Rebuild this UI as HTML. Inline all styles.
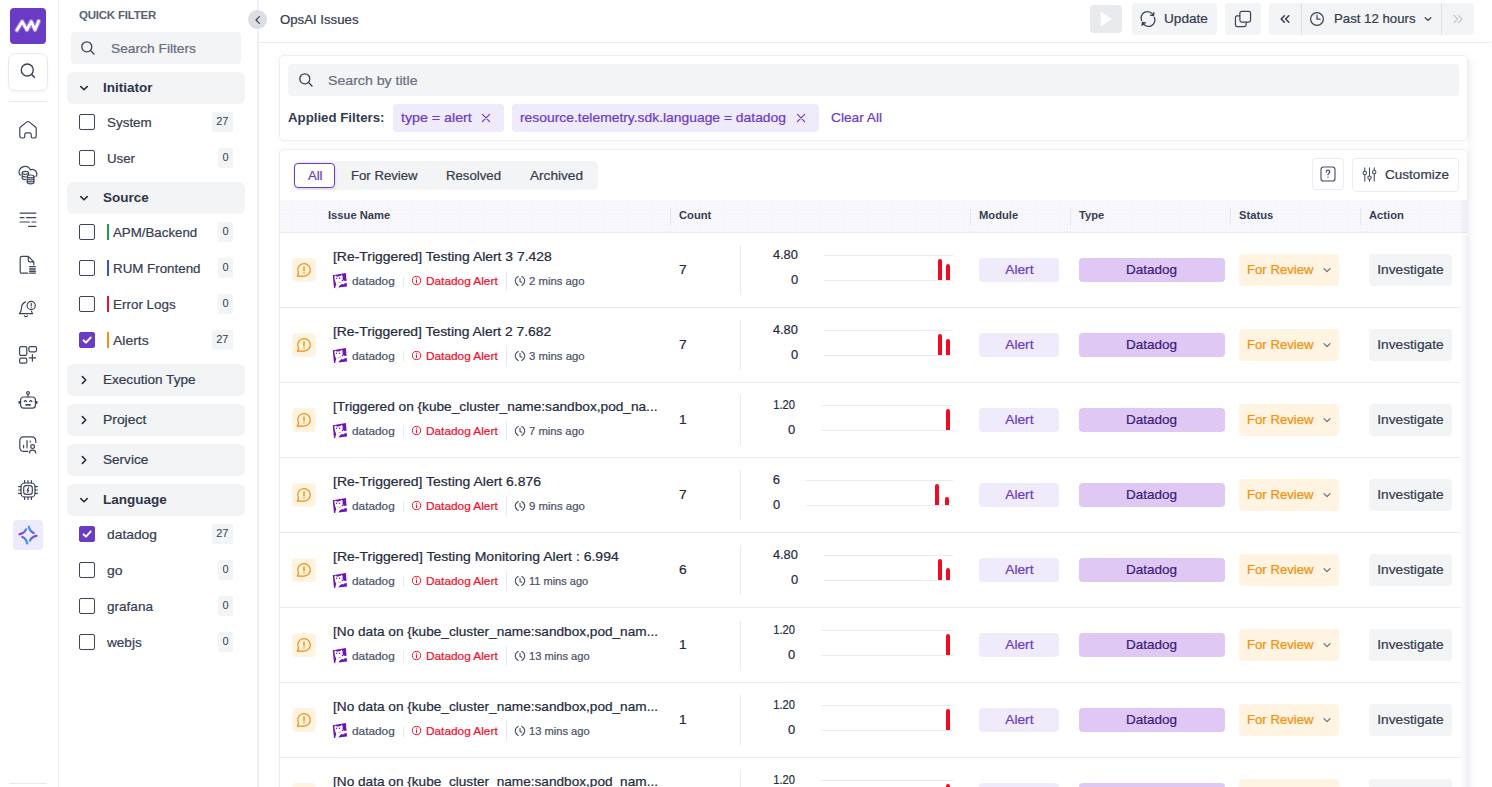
<!DOCTYPE html>
<html lang="en">
<head>
<meta charset="utf-8">
<title>OpsAI Issues</title>
<style>
*{box-sizing:border-box;margin:0;padding:0}
html,body{width:1492px;height:787px;overflow:hidden;background:#fff}
body{font-family:"Liberation Sans",Arial,sans-serif;color:#353c4e;font-size:14px;position:relative}
.abs{position:absolute}
i{font-style:normal}
/* NAV */
#nav{position:absolute;left:0;top:0;width:59px;height:787px;border-right:1px solid #efeff3;background:#fff}
#logo{position:absolute;left:10px;top:8px;width:36px;height:36px;border-radius:4px;background:#6a3cc6}
#nsearch{position:absolute;left:8px;top:53px;width:40px;height:38px;border:1px solid #e9eaee;border-radius:7px;background:#fff;box-shadow:0 2px 3px rgba(0,0,0,.04)}
.ndiv{position:absolute;left:9px;width:38px;height:1px;background:#e9eaee}
.nico{position:absolute;left:18px;width:20px;height:20px}
.nico svg{display:block;width:20px;height:20px;fill:none;stroke:#3d455a;stroke-width:1.2;stroke-linecap:round;stroke-linejoin:round}
#nactive{position:absolute;left:13px;top:520px;width:30px;height:30px;border-radius:4px;background:#efeafb}
/* FILTER PANEL */
#fp{position:absolute;left:59px;top:0;width:200px;height:787px;border-right:2px solid #efeff5;background:#fff}
.qf{position:absolute;left:20px;top:8px;font-size:11.5px;font-weight:700;color:#5b6172;letter-spacing:-.22px;line-height:14px}
.fsearch{position:absolute;left:12px;top:32px;width:170px;height:32px;border-radius:4px;background:#f3f4f6}
.fsearch span{position:absolute;left:40px;top:0;line-height:32px;font-size:14px;color:#5d6473}
.gh{position:absolute;left:8px;width:178px;height:32px;border-radius:6px;background:#f3f4f6;line-height:32px;font-size:14px;color:#353c4e}
.gh b{position:absolute;left:36px;top:0;font-weight:700;font-size:13.5px;color:#2e3547}
.gh span{position:absolute;left:36px;top:0}
.gh svg{position:absolute;left:11px;top:10px;width:12px;height:12px;fill:none;stroke:#2a3042;stroke-width:1.6;stroke-linecap:round;stroke-linejoin:round}
.fi{position:absolute;left:0;width:199px;height:20px}
.cb{position:absolute;left:20px;top:2px;width:16px;height:16px;border:1px solid #3c4459;border-radius:2px;background:#fff}
.cb.on{background:#6a3cc6;border-color:#6a3cc6}
.cb.on svg{position:absolute;left:1px;top:1px;width:12px;height:12px;fill:none;stroke:#fff;stroke-width:2;stroke-linecap:round;stroke-linejoin:round}
.fi .lb{position:absolute;left:48px;top:.75px;line-height:20px;color:#394052}
.fi .bar{position:absolute;left:48px;top:2px;width:2px;height:16px}
.fi .lb2{left:54px}
.fi .ct{position:absolute;right:25px;top:0;height:20px;line-height:18.5px;padding:0 4.5px;font-size:11px;background:#f3f4f6;border-radius:2px;color:#353c4e}
/* MAIN */
#collapse{position:absolute;left:248px;top:10px;width:19px;height:19px;border-radius:50%;background:#dcdee3;z-index:5}
#collapse svg{position:absolute;left:4.5px;top:4.5px;width:10px;height:10px;fill:none;stroke:#3a4257;stroke-width:1.2;stroke-linecap:round;stroke-linejoin:round}
#title{position:absolute;left:279.75px;top:8.5px;line-height:20px;color:#353c4e}
#hline{position:absolute;left:259px;top:42px;width:1232px;height:1px;background:#ececf1}
.hb{position:absolute;top:3px;height:32px;background:#f3f4f6;border-radius:4px;color:#353c4e;font-size:14px;line-height:32px}
.hb svg{position:absolute;fill:none;stroke:#3a4257;stroke-width:1.3;stroke-linecap:round;stroke-linejoin:round}
.card{position:absolute;left:279px;width:1189px;border:1px solid #eeeef3;border-radius:5px;background:#fff;box-shadow:0 0 7px rgba(30,30,70,.045)}
#msearch{position:absolute;left:288px;top:64px;width:1171px;height:32px;border-radius:4px;background:#f3f4f6}
#msearch span{position:absolute;left:40px;top:0;line-height:32px;font-size:14px;color:#636a79}
.chip{position:absolute;top:104px;height:28px;border-radius:4px;background:#f0ebfb;color:#6a3cc6;font-size:14px;line-height:28px}
.chip span{position:absolute;left:8px;top:0;white-space:nowrap}
.chip svg{position:absolute;top:9px;width:10px;height:10px;stroke:#6a3cc6;stroke-width:1.2;stroke-linecap:round;fill:none}
#tabs{position:absolute;left:294px;top:161px;width:304px;height:29px;border-radius:5px;background:#f3f4f6}
#tabs .t{position:absolute;top:0;line-height:29px;color:#353c4e}
#tall{position:absolute;left:294px;top:163px;width:41px;height:25px;border:1px solid #6a3cc6;border-radius:4px;background:#fff;color:#6a3cc6;font-size:13.5px;line-height:23px;text-align:center;box-shadow:0 1px 3px rgba(60,40,120,.18)}
.ob{position:absolute;top:158px;height:32px;border:1px solid #ececf1;border-radius:4px;background:#fff}
.ob svg{position:absolute;fill:none;stroke:#414960;stroke-width:1.1;stroke-linecap:round;stroke-linejoin:round}
#thead{position:absolute;left:280px;top:200px;width:1187px;height:33px;background:#f8f7fb radial-gradient(circle,#f0eef7 .5px,rgba(240,238,247,0) .85px) 0 0/3px 3px;border-bottom:1px solid #ececf3}
#thead .h{position:absolute;top:0;line-height:31px;font-size:11.2px;font-weight:700;color:#363e52}
#thead .d{position:absolute;top:8px;width:1px;height:17px;background:#e6e6ee}
.row{position:absolute;left:280px;width:1181px;height:76px;border-bottom:1px solid #ececf1}
.ri{position:absolute;left:12px;top:26px;width:24px;height:24px;border-radius:4px;background:#fff3e2}
.ri svg{position:absolute;left:4px;top:4px;width:16px;height:16px;fill:none;stroke:#f98a0a;stroke-width:1.2;stroke-linecap:round;stroke-linejoin:round}
.rt{position:absolute;left:53px;top:15.25px;line-height:20px;color:#262c3d}
.rs{position:absolute;top:41.3px;line-height:16px;color:#4b5366}
.rs.red{color:#f3102e}
.sd{position:absolute;width:1px;background:#e9e9ee}
.cnt{position:absolute;left:399.25px;top:28px;line-height:20px;color:#262c3d}
.br{position:absolute;width:4px;background:#f00a22;border-radius:2px 2px 0 0}
.bAlert{position:absolute;left:699px;top:26px;width:80px;height:24px;border-radius:4px;background:#f0ebfb;color:#6a3cc6;font-size:13.5px;line-height:24px;text-align:center}
.bDd{position:absolute;left:799px;top:26px;width:146px;height:24px;border-radius:4px;background:#dfc8f4;color:#3b1c78;font-size:13.5px;line-height:24px;text-align:center}
.bSt{position:absolute;left:959px;top:22px;width:100px;height:32px;border-radius:4px;background:#fff3e2;color:#f79009;font-size:13.5px;line-height:32px}
.bSt span{position:absolute;left:8px;top:0}
.bSt svg{position:absolute;left:83px;top:11px;width:10px;height:10px;fill:none;stroke:#666d7c;stroke-width:1.2;stroke-linecap:round;stroke-linejoin:round}
.bInv{position:absolute;left:1089px;top:22px;width:83px;height:32px;border-radius:4px;background:#f3f4f6;color:#353c4e;font-size:13.5px;line-height:32px;text-align:center}
#rshadow{position:absolute;left:1468px;top:60px;width:9px;height:730px;background:linear-gradient(to right,rgba(30,30,70,.035),rgba(30,30,70,0))}
.yl{position:relative;height:75px;font-size:12.8px;color:#262c3d;text-align:right;padding-top:15.2px;line-height:16px;white-space:nowrap}
.yl div{position:static;height:16px;margin-bottom:9px}
.cg{flex:1;margin-left:26px;position:relative;height:75px}
.cg:before,.cg:after{content:"";position:absolute;left:0;right:0;height:1px;background:#ebebef}
.cg:before{top:23px}
.cg:after{top:48px}

.tx{display:inline-block;white-space:nowrap;transform-origin:0 50%;-webkit-text-stroke:.22px currentColor}
.txc{transform-origin:50% 50%}
.txr{transform-origin:100% 50%}
.yl div{display:flex;justify-content:flex-end}
#rstrip{position:absolute;left:1459px;top:200px;width:8px;height:600px;background:linear-gradient(to right,rgba(40,30,90,0),rgba(40,30,90,.05))}
</style>
</head>
<body>
<div id="nav">
<div id="logo"><svg viewBox="0 0 36 36" width="36" height="36"><path d="M6.8 22.2 L12.2 13.6 L16.9 21.8 L21.2 13.6 L25 21.8 L28.6 13.2" fill="none" stroke="#d6c6f7" stroke-width="4.8" stroke-linecap="round" stroke-linejoin="round" opacity=".45"/><path d="M6.8 22.2 L12.2 13.6 L16.9 21.8 L21.2 13.6 L25 21.8 L28.6 13.2" fill="none" stroke="#fff" stroke-width="2.7" stroke-linecap="round" stroke-linejoin="round"/></svg></div>
<div id="nsearch"><svg viewBox="0 0 38 36" width="38" height="36"><circle cx="18.3" cy="16" r="6" fill="none" stroke="#3a4257" stroke-width="1.4"/><path d="M22.7 20.4 L25.4 23.2" stroke="#3a4257" stroke-width="1.5" stroke-linecap="round"/></svg></div>
<div class="ndiv" style="top:101px"></div>
<div class="ndiv" style="top:783px"></div>
<div class="nico" style="top:120px"><svg viewBox="0 0 20 20" ><path d="M1.8 8.4 Q1.8 7.6 2.5 7 L8.9 1.9 Q10 1.1 11.1 1.9 L17.5 7 Q18.2 7.6 18.2 8.4 V15.8 Q18.2 18 16 18 H14.6 Q13.2 18 13.2 16.6 V14.4 Q13.2 12.8 11.6 12.8 H8.4 Q6.8 12.8 6.8 14.4 V16.6 Q6.8 18 5.4 18 H4 Q1.8 18 1.8 15.8 Z"/></svg></div>
<div class="nico" style="top:165px"><svg viewBox="0 0 20 20" ><path d="M2.3 10.2 Q0.6 8.6 1.2 6.2 Q2.2 1.8 7 1.4 Q10.8 1.2 12.4 4.9 Q13.6 4.2 15.2 4.6 Q18.8 5.6 18.9 9 Q18.9 10.4 18.1 11.4"/><ellipse cx="7.4" cy="7.8" rx="3.2" ry="1.5"/><path d="M4.2 7.8 V13 Q4.2 14.6 7.6 14.6 M4.2 10.4 Q4.4 11.8 7.4 11.9 M10.6 7.8 V9.4"/><ellipse cx="12.6" cy="11.4" rx="3.4" ry="1.4"/><path d="M9.2 11.4 V17.3 Q9.2 18.8 12.6 18.8 Q16 18.8 16 17.3 V11.4 M9.2 13.5 Q9.3 14.9 12.6 14.9 Q15.9 14.9 16 13.5 M9.2 15.5 Q9.3 16.9 12.6 16.9 Q15.9 16.9 16 15.5"/></svg></div>
<div class="nico" style="top:210px"><svg viewBox="0 0 20 20" ><path d="M2.2 3.2 H17.8 M2.2 7.6 H6 M8.6 7.6 H17.8 M2.2 12 H11.4 M14 12 H17.8 M10.6 16.4 H17.8"/></svg></div>
<div class="nico" style="top:255px"><svg viewBox="0 0 20 20" ><path d="M9.8 18.2 H4 Q2.2 18.2 2.2 16.4 V3.2 Q2.2 1.4 4 1.4 H10.3 L15.8 6.9 V9.8 M10.3 1.6 V5.3 Q10.3 6.9 11.9 6.9 H15.6"/><path d="M11.2 11.5 H17.8 M11.2 13.2 H17.8 M11.2 14.9 H17.8 M11.2 16.6 H17.8 M11.2 18.2 H17.8" stroke-width="1.15" stroke-linecap="butt"/></svg></div>
<div class="nico" style="top:300px"><svg viewBox="0 0 20 20" ><path d="M7.6 1.9 Q3.6 3.4 3.4 8.4 Q3.3 11.6 1.4 13.6 H14.6 Q13.8 12.6 13.5 11"/><path d="M6.4 15.8 Q7.9 17.6 9.4 15.8"/><circle cx="13.2" cy="5.5" r="4.1"/><path d="M13.2 3.4 V6 M13.2 7.7 V7.8"/></svg></div>
<div class="nico" style="top:345px"><svg viewBox="0 0 20 20" ><rect x="1.6" y="1.6" width="7.2" height="8.8" rx="1.5"/><rect x="10.9" y="1.6" width="7.6" height="5.2" rx="1.5"/><rect x="1.6" y="13.2" width="7.2" height="5" rx="1.5"/><path d="M14.4 9.6 V16.2 M11.1 12.9 H17.7"/></svg></div>
<div class="nico" style="top:390px"><svg viewBox="0 0 20 20" ><circle cx="10" cy="3.1" r="1.4"/><path d="M10 4.5 V7"/><rect x="2.6" y="7" width="14.8" height="11.2" rx="3"/><path d="M.5 12.4 H2.6 M17.4 12.4 H19.5" stroke-width="2.6" stroke-linecap="butt"/><path d="M6.2 11.6 Q7.4 9.6 8.6 11.6 M11.6 11.6 Q12.8 9.6 14 11.6"/><path d="M7.4 14.9 H12.8" stroke-width="1.7" stroke-linecap="butt"/></svg></div>
<div class="nico" style="top:435px"><svg viewBox="0 0 20 20" ><path d="M9.6 16.4 H6 Q1.8 16.4 1.8 12.2 V6 Q1.8 1.8 6 1.8 H13.6 Q17.8 1.8 17.8 6 V7.6"/><path d="M5.6 10.4 V12.8 M9 5.6 V12.8 M12.2 6.2 V7"/><circle cx="14.6" cy="11.6" r="1.9"/><path d="M11.4 18 Q11.6 15.2 14.6 15.2 Q17.6 15.2 17.8 18"/></svg></div>
<div class="nico" style="top:480px"><svg viewBox="0 0 20 20" ><rect x="3" y="3" width="14" height="14" rx="3.6"/><rect x="5.7" y="5.7" width="8.6" height="8.6" rx="2.4"/><path d="M10.7 7.6 L9.1 10.2 H10.9 L9.3 12.4" stroke-width="1.1"/><path d="M6.6 .6 V3 M10 .6 V3 M13.4 .6 V3 M6.6 17 V19.4 M10 17 V19.4 M13.4 17 V19.4 M.6 6.6 H3 M.6 10 H3 M.6 13.4 H3 M17 6.6 H19.4 M17 10 H19.4 M17 13.4 H19.4" stroke-width="1.2"/></svg></div>
<div id="nactive"><svg viewBox="0 0 30 30" width="30" height="30"><defs><linearGradient id="g1" gradientUnits="userSpaceOnUse" x1="0" y1="6" x2="0" y2="24"><stop offset="0" stop-color="#25b4e8"/><stop offset=".3" stop-color="#5a72e2"/><stop offset=".5" stop-color="#7d3cd6"/><stop offset=".7" stop-color="#5a72e2"/><stop offset="1" stop-color="#25b4e8"/></linearGradient></defs><g fill="none" stroke="url(#g1)" stroke-width="2.3" stroke-linecap="round"><path d="M15.8 6.6 Q16.8 11.4 20.6 13"/><path d="M23.4 15.8 Q18.6 16.8 17 20.6"/><path d="M14.2 23.4 Q13.2 18.6 9.4 17"/><path d="M6.6 14.2 Q11.4 13.2 13 9.4"/></g></svg></div>
</div>
<div id="fp">
<div class="qf">QUICK FILTER</div>
<div class="fsearch"><svg viewBox="0 0 16 16" width="16" height="16" style="position:absolute;left:9px;top:8px"><circle cx="6.8" cy="6.8" r="5" fill="none" stroke="#3a4257" stroke-width="1.3"/><path d="M10.5 10.5 L14 14" stroke="#3a4257" stroke-width="1.4" stroke-linecap="round"/></svg><span class="tx" style="font-size:13px;transform:scaleX(1.0599);position:absolute;left:40px;top:.75px;line-height:32px;color:#666d7c">Search Filters</span></div>
<div class="gh" style="top:72px"><svg viewBox="0 0 12 12" ><path d="M2.8 4.6 L6 7.8 L9.2 4.6"/></svg><b>Initiator</b></div>
<div class="fi" style="top:112px"><div class="cb"></div><span class="tx lb" style="font-size:13px;transform:scaleX(1.0325);">System</span><div class="ct">27</div></div>
<div class="fi" style="top:148px"><div class="cb"></div><span class="tx lb" style="font-size:13px;transform:scaleX(1.0201);">User</span><div class="ct">0</div></div>
<div class="gh" style="top:182px"><svg viewBox="0 0 12 12" ><path d="M2.8 4.6 L6 7.8 L9.2 4.6"/></svg><b>Source</b></div>
<div class="fi" style="top:222px"><div class="cb"></div><div class="bar" style="background:#17a34a"></div><span class="tx lb lb2" style="font-size:13px;transform:scaleX(1.0227);">APM/Backend</span><div class="ct">0</div></div>
<div class="fi" style="top:258px"><div class="cb"></div><div class="bar" style="background:#3b4fd8"></div><span class="tx lb lb2" style="font-size:13px;transform:scaleX(1.0264);">RUM Frontend</span><div class="ct">0</div></div>
<div class="fi" style="top:294px"><div class="cb"></div><div class="bar" style="background:#ee1026"></div><span class="tx lb lb2" style="font-size:13px;transform:scaleX(1.0339);">Error Logs</span><div class="ct">0</div></div>
<div class="fi" style="top:330px"><div class="cb on"><svg viewBox="0 0 12 12" ><path d="M2.6 6.4 L5 8.6 L9.6 3.6"/></svg></div><div class="bar" style="background:#f79009"></div><span class="tx lb lb2" style="font-size:13px;transform:scaleX(1.0758);">Alerts</span><div class="ct">27</div></div>
<div class="gh" style="top:364px"><svg viewBox="0 0 12 12" ><path d="M4.4 2.6 L7.8 6 L4.4 9.4"/></svg><span class="tx" style="font-size:13px;transform:scaleX(1.0434);position:absolute;left:36px;top:0;line-height:32px">Execution Type</span></div>
<div class="gh" style="top:404px"><svg viewBox="0 0 12 12" ><path d="M4.4 2.6 L7.8 6 L4.4 9.4"/></svg><span class="tx" style="font-size:13px;transform:scaleX(1.0689);position:absolute;left:36px;top:0;line-height:32px">Project</span></div>
<div class="gh" style="top:444px"><svg viewBox="0 0 12 12" ><path d="M4.4 2.6 L7.8 6 L4.4 9.4"/></svg><span class="tx" style="font-size:13px;transform:scaleX(1.0438);position:absolute;left:36px;top:0;line-height:32px">Service</span></div>
<div class="gh" style="top:484px"><svg viewBox="0 0 12 12" ><path d="M2.8 4.6 L6 7.8 L9.2 4.6"/></svg><b>Language</b></div>
<div class="fi" style="top:524px"><div class="cb on"><svg viewBox="0 0 12 12" ><path d="M2.6 6.4 L5 8.6 L9.6 3.6"/></svg></div><span class="tx lb" style="font-size:13px;transform:scaleX(1.0640);">datadog</span><div class="ct">27</div></div>
<div class="fi" style="top:560px"><div class="cb"></div><span class="tx lb" style="font-size:13px;transform:scaleX(1.0719);">go</span><div class="ct">0</div></div>
<div class="fi" style="top:596px"><div class="cb"></div><span class="tx lb" style="font-size:13px;transform:scaleX(1.0433);">grafana</span><div class="ct">0</div></div>
<div class="fi" style="top:632px"><div class="cb"></div><span class="tx lb" style="font-size:13px;transform:scaleX(1.0440);">webjs</span><div class="ct">0</div></div>
</div>
<div id="main">
<div id="collapse"><svg viewBox="0 0 10 10" ><path d="M6.4 1.6 L3 5 L6.4 8.4"/></svg></div>
<div id="title"><span class="tx" style="font-size:13px;transform:scaleX(1.0154);">OpsAI Issues</span></div>
<div id="hline"></div>
<div class="hb" style="left:1090px;top:5px;width:32px;height:28px;background:#e9eaed"><svg viewBox="0 0 32 28" width="32" height="28" style="left:0;top:0"><path d="M11.4 7.6 L21.4 14 L11.4 20.4 Z" fill="#fff" stroke="#fff" stroke-width="1"/></svg></div>
<div class="hb" style="left:1132px;width:85px"><svg viewBox="0 0 18 18" width="18" height="18" style="left:7px;top:7px"><path d="M2.6 10.6 A6.4 6.4 0 0 1 14.4 5.4 M14.9 2.6 L14.5 5.6 L11.5 5.2 M15.4 7.4 A6.4 6.4 0 0 1 3.6 12.6 M3.1 15.4 L3.5 12.4 L6.5 12.8"/></svg><span class="tx" style="font-size:13px;transform:scaleX(1.0472);position:absolute;left:32px;top:0;line-height:32px">Update</span></div>
<div class="hb" style="left:1225px;width:36px"><svg viewBox="0 0 18 18" width="20" height="20" style="left:8px;top:6px"><rect x="6.2" y="2.2" width="9.6" height="9.6" rx="1.6" stroke-width="1.1"/><path d="M5.8 6.2 H3.8 Q2.2 6.2 2.2 7.8 V14.2 Q2.2 15.8 3.8 15.8 H10.2 Q11.8 15.8 11.8 14.2 V12.2" stroke-width="1.1"/></svg></div>
<div class="hb" style="left:1269px;width:205px"><svg viewBox="0 0 12 12" width="12" height="12" style="left:10px;top:10px"><path d="M5.4 2.8 L2.2 6 L5.4 9.2 M9.8 2.8 L6.6 6 L9.8 9.2" stroke-width="1.6"/></svg><i style="position:absolute;left:32px;top:0;width:1px;height:32px;background:#dfe0e5"></i><svg viewBox="0 0 16 16" width="16" height="16" style="left:40px;top:8px"><circle cx="8" cy="8" r="6.4" stroke-width="1.2"/><path d="M8 4.4 V8.2 H11" stroke-width="1.2"/></svg><span class="tx" style="font-size:13px;transform:scaleX(1.0160);position:absolute;left:65px;top:0;line-height:32px">Past 12 hours</span><svg viewBox="0 0 10 10" width="10" height="10" style="left:154px;top:11px"><path d="M2.2 3.7 L5 6.4 L7.8 3.7" stroke-width="1.3"/></svg><i style="position:absolute;left:172px;top:0;width:1px;height:32px;background:#dfe0e5"></i><svg viewBox="0 0 12 12" width="12" height="12" style="left:183px;top:10px"><path d="M2 2.4 L5.6 6 L2 9.6 M6.4 2.4 L10 6 L6.4 9.6" stroke="#c3c6cf" stroke-width="1.3"/></svg></div>
<div class="card" style="top:55px;height:86px"></div>
<div id="msearch"><svg viewBox="0 0 16 16" width="16" height="16" style="position:absolute;left:10px;top:8px"><circle cx="6.8" cy="6.8" r="5" fill="none" stroke="#3a4257" stroke-width="1.3"/><path d="M10.5 10.5 L14 14" stroke="#3a4257" stroke-width="1.4" stroke-linecap="round"/></svg><span class="tx" style="font-size:13px;transform:scaleX(1.0865);position:absolute;left:40px;top:.75px;line-height:32px;color:#6a7180">Search by title</span></div>
<div class="abs" style="left:288px;top:108px;line-height:20px;font-size:13.25px;font-weight:700;color:#343b4f">Applied Filters:</div>
<div class="chip" style="left:393px;width:111px"><span class="tx" style="font-size:13px;transform:scaleX(1.0939);position:absolute;left:7.75px;top:0;line-height:28px">type = alert</span><svg viewBox="0 0 10 10" style="left:88px"><path d="M1.4 1.4 L8.6 8.6 M8.6 1.4 L1.4 8.6"/></svg></div>
<div class="chip" style="left:512px;width:307px"><span class="tx" style="font-size:13px;transform:scaleX(1.0663);position:absolute;left:8px;top:0;line-height:28px">resource.telemetry.sdk.language = datadog</span><svg viewBox="0 0 10 10" style="left:284px"><path d="M1.4 1.4 L8.6 8.6 M8.6 1.4 L1.4 8.6"/></svg></div>
<div class="abs" style="left:831px;top:107px;line-height:20px;color:#6a3cc6"><span class="tx" style="font-size:13px;transform:scaleX(1.0535);">Clear All</span></div>
<div class="card" style="top:149px;height:660px;border-bottom-left-radius:0;border-bottom-right-radius:0"></div>
<div id="tabs"><span class="tx t" style="font-size:13px;transform:scaleX(1.0116);left:56.5px">For Review</span><span class="tx t" style="font-size:13px;transform:scaleX(1.0148);left:151.75px">Resolved</span><span class="tx t" style="font-size:13px;transform:scaleX(1.0478);left:235.5px">Archived</span></div>
<div id="tall"><span class="tx txc" style="font-size:13px;transform:scaleX(1.0105);position:relative;left:.5px">All</span></div>
<div class="ob" style="left:1312px;width:32px"><svg viewBox="0 0 18 18" width="18" height="18" style="left:6px;top:6px"><rect x="2" y="2" width="14" height="14" rx="2.6"/><path d="M7.2 7 Q7.3 5.2 9 5.2 Q10.8 5.2 10.8 6.8 Q10.8 7.8 9.6 8.4 Q9 8.8 9 9.8 M9 12.2 V12.3" stroke-width="1.2"/></svg></div>
<div class="ob" style="left:1352px;width:107px;height:34px"><svg viewBox="0 0 18 18" width="17" height="17" style="left:8px;top:7px"><path d="M4 2 V5.4 M4 9.2 V16 M9 2 V10.4 M9 14.2 V16 M14 2 V4.6 M14 8.4 V16"/><circle cx="4" cy="7.3" r="1.8"/><circle cx="9" cy="12.3" r="1.8"/><circle cx="14" cy="6.5" r="1.8"/></svg><span class="tx" style="font-size:13px;transform:scaleX(1.0422);position:absolute;left:32px;top:1px;line-height:30px;color:#353c4e">Customize</span></div>
<div id="thead"><div class="h" style="left:48px">Issue Name</div><div class="h" style="left:399px">Count</div><div class="h" style="left:699px">Module</div><div class="h" style="left:799px">Type</div><div class="h" style="left:959px">Status</div><div class="h" style="left:1089px">Action</div><div class="d" style="left:390px"></div><div class="d" style="left:690px"></div><div class="d" style="left:790px"></div><div class="d" style="left:950px"></div><div class="d" style="left:1080px"></div></div>
<div class="row" style="top:232px"><div class="ri"><svg viewBox="0 0 16 16" ><path d="M8 14.2 A6.3 6.3 0 1 0 2.5 11 L1.4 14.2 Z"/><path d="M8 4.4 V9.3 M8 10.2 V11.5" stroke="#fdab1e" stroke-width="1.9" stroke-linecap="butt"/></svg></div><span class="tx rt" style="font-size:13px;transform:scaleX(1.0696);">[Re-Triggered] Testing Alert 3 7.428</span><svg viewBox="0 0 16 17" width="16" height="17" style="position:absolute;left:52px;top:41px"><path d="M0.75 2.2 L13.9 0.1 L15 13.5 L6.4 14.5 L4.9 16.4 L3.6 14.75 L2 14.9 Z" fill="#7014b4"/><path d="M2.3 3.5 L3.7 2.5 L5 3.7 L8.3 3.1 L9.8 1.8 L10.7 3.4 L10.5 6 L11.7 7.7 L15.4 8 L15.5 9.5 L12.6 10.5 L11.2 11.4 L10 10.9 L8.2 12 L7 13.6 L6.2 15.6 L4.9 16.4 L3.5 15.6 L3.3 14 L4.3 11 L3.2 8.4 L2.6 5.6 Z" fill="#fff"/><circle cx="4.6" cy="5.3" r=".72" fill="#7014b4"/><circle cx="7.5" cy="5.2" r=".78" fill="#7014b4"/><circle cx="10.4" cy="7.5" r=".7" fill="#7014b4"/><path d="M6 9.1 Q7.6 10 9.3 8.9" stroke="#7014b4" stroke-width=".55" fill="none" opacity=".7"/></svg><span class="tx rs" style="font-size:11.2px;transform:scaleX(1.0559);left:72px">datadog</span><div class="sd" style="left:123px;top:44px;height:11px"></div><svg viewBox="0 0 11 11" width="11" height="11" style="position:absolute;left:131px;top:43px"><circle cx="5.5" cy="5.5" r="4.1" fill="none" stroke="#f3102e" stroke-width="1"/><path d="M5.5 5 V7.7 M5.5 3.2 V3.3" stroke="#f3102e" stroke-width="1" stroke-linecap="round"/></svg><span class="tx rs red" style="font-size:11.2px;transform:scaleX(1.0572);left:145.75px">Datadog Alert</span><div class="sd" style="left:226px;top:39px;height:20px"></div><svg viewBox="0 0 12 12" width="12" height="12" style="position:absolute;left:234px;top:43px"><path d="M4.2 1.5 Q1.1 3 1.3 6.4 Q1.6 9.2 4.2 10.5 M7.8 1.5 Q10.9 3 10.7 6.4 Q10.4 9.2 7.8 10.5" fill="none" stroke="#454d60" stroke-width="1.1" stroke-linecap="round"/><path d="M6 3.2 V6.4 L7.8 7.3" fill="none" stroke="#454d60" stroke-width="1.1" stroke-linecap="round" stroke-linejoin="round"/></svg><span class="tx rs" style="font-size:11.2px;transform:scaleX(1.0130);left:249.25px">2 mins ago</span><span class="tx cnt" style="font-size:13px;transform:scaleX(1.0600);">7</span><div class="sd" style="left:460px;top:13px;height:50px"></div><div class="ych" style="position:absolute;left:493px;top:0;width:180px;height:75px;display:flex"><div class="yl" style="width:25px"><div><span class="tx txr" style="font-size:12.8px;transform:scaleX(1.0035);">4.80</span></div><div><span class="tx txr" style="font-size:12.8px;transform:scaleX(1.0114);">0</span></div></div><div class="cg"></div></div><div class="br" style="left:658px;top:27px;height:21px"></div><div class="br" style="left:666px;top:32px;height:16px"></div><div class="bAlert"><span class="tx txc" style="font-size:13px;transform:scaleX(1.0568);">Alert</span></div><div class="bDd"><span class="tx txc" style="font-size:13px;transform:scaleX(1.0376);">Datadog</span></div><div class="bSt"><span class="tx" style="font-size:13px;transform:scaleX(1.0116);position:absolute;left:8px;top:0;line-height:32px">For Review</span><svg viewBox="0 0 10 10" ><path d="M2 3.6 L5 6.6 L8 3.6"/></svg></div><div class="bInv"><span class="tx txc" style="font-size:13px;transform:scaleX(1.0545);">Investigate</span></div></div>
<div class="row" style="top:307px"><div class="ri"><svg viewBox="0 0 16 16" ><path d="M8 14.2 A6.3 6.3 0 1 0 2.5 11 L1.4 14.2 Z"/><path d="M8 4.4 V9.3 M8 10.2 V11.5" stroke="#fdab1e" stroke-width="1.9" stroke-linecap="butt"/></svg></div><span class="tx rt" style="font-size:13px;transform:scaleX(1.0672);">[Re-Triggered] Testing Alert 2 7.682</span><svg viewBox="0 0 16 17" width="16" height="17" style="position:absolute;left:52px;top:41px"><path d="M0.75 2.2 L13.9 0.1 L15 13.5 L6.4 14.5 L4.9 16.4 L3.6 14.75 L2 14.9 Z" fill="#7014b4"/><path d="M2.3 3.5 L3.7 2.5 L5 3.7 L8.3 3.1 L9.8 1.8 L10.7 3.4 L10.5 6 L11.7 7.7 L15.4 8 L15.5 9.5 L12.6 10.5 L11.2 11.4 L10 10.9 L8.2 12 L7 13.6 L6.2 15.6 L4.9 16.4 L3.5 15.6 L3.3 14 L4.3 11 L3.2 8.4 L2.6 5.6 Z" fill="#fff"/><circle cx="4.6" cy="5.3" r=".72" fill="#7014b4"/><circle cx="7.5" cy="5.2" r=".78" fill="#7014b4"/><circle cx="10.4" cy="7.5" r=".7" fill="#7014b4"/><path d="M6 9.1 Q7.6 10 9.3 8.9" stroke="#7014b4" stroke-width=".55" fill="none" opacity=".7"/></svg><span class="tx rs" style="font-size:11.2px;transform:scaleX(1.0559);left:72px">datadog</span><div class="sd" style="left:123px;top:44px;height:11px"></div><svg viewBox="0 0 11 11" width="11" height="11" style="position:absolute;left:131px;top:43px"><circle cx="5.5" cy="5.5" r="4.1" fill="none" stroke="#f3102e" stroke-width="1"/><path d="M5.5 5 V7.7 M5.5 3.2 V3.3" stroke="#f3102e" stroke-width="1" stroke-linecap="round"/></svg><span class="tx rs red" style="font-size:11.2px;transform:scaleX(1.0572);left:145.75px">Datadog Alert</span><div class="sd" style="left:226px;top:39px;height:20px"></div><svg viewBox="0 0 12 12" width="12" height="12" style="position:absolute;left:234px;top:43px"><path d="M4.2 1.5 Q1.1 3 1.3 6.4 Q1.6 9.2 4.2 10.5 M7.8 1.5 Q10.9 3 10.7 6.4 Q10.4 9.2 7.8 10.5" fill="none" stroke="#454d60" stroke-width="1.1" stroke-linecap="round"/><path d="M6 3.2 V6.4 L7.8 7.3" fill="none" stroke="#454d60" stroke-width="1.1" stroke-linecap="round" stroke-linejoin="round"/></svg><span class="tx rs" style="font-size:11.2px;transform:scaleX(1.0176);left:249.25px">3 mins ago</span><span class="tx cnt" style="font-size:13px;transform:scaleX(1.0600);">7</span><div class="sd" style="left:460px;top:13px;height:50px"></div><div class="ych" style="position:absolute;left:493px;top:0;width:180px;height:75px;display:flex"><div class="yl" style="width:25px"><div><span class="tx txr" style="font-size:12.8px;transform:scaleX(1.0035);">4.80</span></div><div><span class="tx txr" style="font-size:12.8px;transform:scaleX(1.0114);">0</span></div></div><div class="cg"></div></div><div class="br" style="left:658px;top:27px;height:21px"></div><div class="br" style="left:666px;top:32px;height:16px"></div><div class="bAlert"><span class="tx txc" style="font-size:13px;transform:scaleX(1.0568);">Alert</span></div><div class="bDd"><span class="tx txc" style="font-size:13px;transform:scaleX(1.0376);">Datadog</span></div><div class="bSt"><span class="tx" style="font-size:13px;transform:scaleX(1.0116);position:absolute;left:8px;top:0;line-height:32px">For Review</span><svg viewBox="0 0 10 10" ><path d="M2 3.6 L5 6.6 L8 3.6"/></svg></div><div class="bInv"><span class="tx txc" style="font-size:13px;transform:scaleX(1.0545);">Investigate</span></div></div>
<div class="row" style="top:382px"><div class="ri"><svg viewBox="0 0 16 16" ><path d="M8 14.2 A6.3 6.3 0 1 0 2.5 11 L1.4 14.2 Z"/><path d="M8 4.4 V9.3 M8 10.2 V11.5" stroke="#fdab1e" stroke-width="1.9" stroke-linecap="butt"/></svg></div><span class="tx rt" style="font-size:13px;transform:scaleX(1.0507);">[Triggered on {kube_cluster_name:sandbox,pod_na...</span><svg viewBox="0 0 16 17" width="16" height="17" style="position:absolute;left:52px;top:41px"><path d="M0.75 2.2 L13.9 0.1 L15 13.5 L6.4 14.5 L4.9 16.4 L3.6 14.75 L2 14.9 Z" fill="#7014b4"/><path d="M2.3 3.5 L3.7 2.5 L5 3.7 L8.3 3.1 L9.8 1.8 L10.7 3.4 L10.5 6 L11.7 7.7 L15.4 8 L15.5 9.5 L12.6 10.5 L11.2 11.4 L10 10.9 L8.2 12 L7 13.6 L6.2 15.6 L4.9 16.4 L3.5 15.6 L3.3 14 L4.3 11 L3.2 8.4 L2.6 5.6 Z" fill="#fff"/><circle cx="4.6" cy="5.3" r=".72" fill="#7014b4"/><circle cx="7.5" cy="5.2" r=".78" fill="#7014b4"/><circle cx="10.4" cy="7.5" r=".7" fill="#7014b4"/><path d="M6 9.1 Q7.6 10 9.3 8.9" stroke="#7014b4" stroke-width=".55" fill="none" opacity=".7"/></svg><span class="tx rs" style="font-size:11.2px;transform:scaleX(1.0559);left:72px">datadog</span><div class="sd" style="left:123px;top:44px;height:11px"></div><svg viewBox="0 0 11 11" width="11" height="11" style="position:absolute;left:131px;top:43px"><circle cx="5.5" cy="5.5" r="4.1" fill="none" stroke="#f3102e" stroke-width="1"/><path d="M5.5 5 V7.7 M5.5 3.2 V3.3" stroke="#f3102e" stroke-width="1" stroke-linecap="round"/></svg><span class="tx rs red" style="font-size:11.2px;transform:scaleX(1.0572);left:145.75px">Datadog Alert</span><div class="sd" style="left:226px;top:39px;height:20px"></div><svg viewBox="0 0 12 12" width="12" height="12" style="position:absolute;left:234px;top:43px"><path d="M4.2 1.5 Q1.1 3 1.3 6.4 Q1.6 9.2 4.2 10.5 M7.8 1.5 Q10.9 3 10.7 6.4 Q10.4 9.2 7.8 10.5" fill="none" stroke="#454d60" stroke-width="1.1" stroke-linecap="round"/><path d="M6 3.2 V6.4 L7.8 7.3" fill="none" stroke="#454d60" stroke-width="1.1" stroke-linecap="round" stroke-linejoin="round"/></svg><span class="tx rs" style="font-size:11.2px;transform:scaleX(1.0084);left:249.25px">7 mins ago</span><span class="tx cnt" style="font-size:13px;transform:scaleX(1.0600);">1</span><div class="sd" style="left:460px;top:13px;height:50px"></div><div class="ych" style="position:absolute;left:493px;top:0;width:180px;height:75px;display:flex"><div class="yl" style="width:21.75px"><div><span class="tx txr" style="font-size:12.8px;transform:scaleX(0.8730);">1.20</span></div><div><span class="tx txr" style="font-size:12.8px;transform:scaleX(1.0114);">0</span></div></div><div class="cg"></div></div><div class="br" style="left:666px;top:27px;height:21px"></div><div class="bAlert"><span class="tx txc" style="font-size:13px;transform:scaleX(1.0568);">Alert</span></div><div class="bDd"><span class="tx txc" style="font-size:13px;transform:scaleX(1.0376);">Datadog</span></div><div class="bSt"><span class="tx" style="font-size:13px;transform:scaleX(1.0116);position:absolute;left:8px;top:0;line-height:32px">For Review</span><svg viewBox="0 0 10 10" ><path d="M2 3.6 L5 6.6 L8 3.6"/></svg></div><div class="bInv"><span class="tx txc" style="font-size:13px;transform:scaleX(1.0545);">Investigate</span></div></div>
<div class="row" style="top:457px"><div class="ri"><svg viewBox="0 0 16 16" ><path d="M8 14.2 A6.3 6.3 0 1 0 2.5 11 L1.4 14.2 Z"/><path d="M8 4.4 V9.3 M8 10.2 V11.5" stroke="#fdab1e" stroke-width="1.9" stroke-linecap="butt"/></svg></div><span class="tx rt" style="font-size:13px;transform:scaleX(1.0740);">[Re-Triggered] Testing Alert 6.876</span><svg viewBox="0 0 16 17" width="16" height="17" style="position:absolute;left:52px;top:41px"><path d="M0.75 2.2 L13.9 0.1 L15 13.5 L6.4 14.5 L4.9 16.4 L3.6 14.75 L2 14.9 Z" fill="#7014b4"/><path d="M2.3 3.5 L3.7 2.5 L5 3.7 L8.3 3.1 L9.8 1.8 L10.7 3.4 L10.5 6 L11.7 7.7 L15.4 8 L15.5 9.5 L12.6 10.5 L11.2 11.4 L10 10.9 L8.2 12 L7 13.6 L6.2 15.6 L4.9 16.4 L3.5 15.6 L3.3 14 L4.3 11 L3.2 8.4 L2.6 5.6 Z" fill="#fff"/><circle cx="4.6" cy="5.3" r=".72" fill="#7014b4"/><circle cx="7.5" cy="5.2" r=".78" fill="#7014b4"/><circle cx="10.4" cy="7.5" r=".7" fill="#7014b4"/><path d="M6 9.1 Q7.6 10 9.3 8.9" stroke="#7014b4" stroke-width=".55" fill="none" opacity=".7"/></svg><span class="tx rs" style="font-size:11.2px;transform:scaleX(1.0559);left:72px">datadog</span><div class="sd" style="left:123px;top:44px;height:11px"></div><svg viewBox="0 0 11 11" width="11" height="11" style="position:absolute;left:131px;top:43px"><circle cx="5.5" cy="5.5" r="4.1" fill="none" stroke="#f3102e" stroke-width="1"/><path d="M5.5 5 V7.7 M5.5 3.2 V3.3" stroke="#f3102e" stroke-width="1" stroke-linecap="round"/></svg><span class="tx rs red" style="font-size:11.2px;transform:scaleX(1.0572);left:145.75px">Datadog Alert</span><div class="sd" style="left:226px;top:39px;height:20px"></div><svg viewBox="0 0 12 12" width="12" height="12" style="position:absolute;left:234px;top:43px"><path d="M4.2 1.5 Q1.1 3 1.3 6.4 Q1.6 9.2 4.2 10.5 M7.8 1.5 Q10.9 3 10.7 6.4 Q10.4 9.2 7.8 10.5" fill="none" stroke="#454d60" stroke-width="1.1" stroke-linecap="round"/><path d="M6 3.2 V6.4 L7.8 7.3" fill="none" stroke="#454d60" stroke-width="1.1" stroke-linecap="round" stroke-linejoin="round"/></svg><span class="tx rs" style="font-size:11.2px;transform:scaleX(1.0221);left:249.25px">9 mins ago</span><span class="tx cnt" style="font-size:13px;transform:scaleX(1.0600);">7</span><div class="sd" style="left:460px;top:13px;height:50px"></div><div class="ych" style="position:absolute;left:493px;top:0;width:180px;height:75px;display:flex"><div class="yl" style="width:7.25px"><div><span class="tx txr" style="font-size:12.8px;transform:scaleX(1.0184);">6</span></div><div><span class="tx txr" style="font-size:12.8px;transform:scaleX(1.0114);">0</span></div></div><div class="cg"></div></div><div class="br" style="left:655px;top:27px;height:21px"></div><div class="br" style="left:665px;top:40px;height:8px"></div><div class="bAlert"><span class="tx txc" style="font-size:13px;transform:scaleX(1.0568);">Alert</span></div><div class="bDd"><span class="tx txc" style="font-size:13px;transform:scaleX(1.0376);">Datadog</span></div><div class="bSt"><span class="tx" style="font-size:13px;transform:scaleX(1.0116);position:absolute;left:8px;top:0;line-height:32px">For Review</span><svg viewBox="0 0 10 10" ><path d="M2 3.6 L5 6.6 L8 3.6"/></svg></div><div class="bInv"><span class="tx txc" style="font-size:13px;transform:scaleX(1.0545);">Investigate</span></div></div>
<div class="row" style="top:532px"><div class="ri"><svg viewBox="0 0 16 16" ><path d="M8 14.2 A6.3 6.3 0 1 0 2.5 11 L1.4 14.2 Z"/><path d="M8 4.4 V9.3 M8 10.2 V11.5" stroke="#fdab1e" stroke-width="1.9" stroke-linecap="butt"/></svg></div><span class="tx rt" style="font-size:13px;transform:scaleX(1.0775);">[Re-Triggered] Testing Monitoring Alert : 6.994</span><svg viewBox="0 0 16 17" width="16" height="17" style="position:absolute;left:52px;top:41px"><path d="M0.75 2.2 L13.9 0.1 L15 13.5 L6.4 14.5 L4.9 16.4 L3.6 14.75 L2 14.9 Z" fill="#7014b4"/><path d="M2.3 3.5 L3.7 2.5 L5 3.7 L8.3 3.1 L9.8 1.8 L10.7 3.4 L10.5 6 L11.7 7.7 L15.4 8 L15.5 9.5 L12.6 10.5 L11.2 11.4 L10 10.9 L8.2 12 L7 13.6 L6.2 15.6 L4.9 16.4 L3.5 15.6 L3.3 14 L4.3 11 L3.2 8.4 L2.6 5.6 Z" fill="#fff"/><circle cx="4.6" cy="5.3" r=".72" fill="#7014b4"/><circle cx="7.5" cy="5.2" r=".78" fill="#7014b4"/><circle cx="10.4" cy="7.5" r=".7" fill="#7014b4"/><path d="M6 9.1 Q7.6 10 9.3 8.9" stroke="#7014b4" stroke-width=".55" fill="none" opacity=".7"/></svg><span class="tx rs" style="font-size:11.2px;transform:scaleX(1.0559);left:72px">datadog</span><div class="sd" style="left:123px;top:44px;height:11px"></div><svg viewBox="0 0 11 11" width="11" height="11" style="position:absolute;left:131px;top:43px"><circle cx="5.5" cy="5.5" r="4.1" fill="none" stroke="#f3102e" stroke-width="1"/><path d="M5.5 5 V7.7 M5.5 3.2 V3.3" stroke="#f3102e" stroke-width="1" stroke-linecap="round"/></svg><span class="tx rs red" style="font-size:11.2px;transform:scaleX(1.0572);left:145.75px">Datadog Alert</span><div class="sd" style="left:226px;top:39px;height:20px"></div><svg viewBox="0 0 12 12" width="12" height="12" style="position:absolute;left:234px;top:43px"><path d="M4.2 1.5 Q1.1 3 1.3 6.4 Q1.6 9.2 4.2 10.5 M7.8 1.5 Q10.9 3 10.7 6.4 Q10.4 9.2 7.8 10.5" fill="none" stroke="#454d60" stroke-width="1.1" stroke-linecap="round"/><path d="M6 3.2 V6.4 L7.8 7.3" fill="none" stroke="#454d60" stroke-width="1.1" stroke-linecap="round" stroke-linejoin="round"/></svg><span class="tx rs" style="font-size:11.2px;transform:scaleX(0.9845);left:249.25px">11 mins ago</span><span class="tx cnt" style="font-size:13px;transform:scaleX(1.0600);">6</span><div class="sd" style="left:460px;top:13px;height:50px"></div><div class="ych" style="position:absolute;left:493px;top:0;width:180px;height:75px;display:flex"><div class="yl" style="width:25px"><div><span class="tx txr" style="font-size:12.8px;transform:scaleX(1.0035);">4.80</span></div><div><span class="tx txr" style="font-size:12.8px;transform:scaleX(1.0114);">0</span></div></div><div class="cg"></div></div><div class="br" style="left:658px;top:27px;height:21px"></div><div class="br" style="left:666px;top:36px;height:12px"></div><div class="bAlert"><span class="tx txc" style="font-size:13px;transform:scaleX(1.0568);">Alert</span></div><div class="bDd"><span class="tx txc" style="font-size:13px;transform:scaleX(1.0376);">Datadog</span></div><div class="bSt"><span class="tx" style="font-size:13px;transform:scaleX(1.0116);position:absolute;left:8px;top:0;line-height:32px">For Review</span><svg viewBox="0 0 10 10" ><path d="M2 3.6 L5 6.6 L8 3.6"/></svg></div><div class="bInv"><span class="tx txc" style="font-size:13px;transform:scaleX(1.0545);">Investigate</span></div></div>
<div class="row" style="top:607px"><div class="ri"><svg viewBox="0 0 16 16" ><path d="M8 14.2 A6.3 6.3 0 1 0 2.5 11 L1.4 14.2 Z"/><path d="M8 4.4 V9.3 M8 10.2 V11.5" stroke="#fdab1e" stroke-width="1.9" stroke-linecap="butt"/></svg></div><span class="tx rt" style="font-size:13px;transform:scaleX(1.0482);">[No data on {kube_cluster_name:sandbox,pod_nam...</span><svg viewBox="0 0 16 17" width="16" height="17" style="position:absolute;left:52px;top:41px"><path d="M0.75 2.2 L13.9 0.1 L15 13.5 L6.4 14.5 L4.9 16.4 L3.6 14.75 L2 14.9 Z" fill="#7014b4"/><path d="M2.3 3.5 L3.7 2.5 L5 3.7 L8.3 3.1 L9.8 1.8 L10.7 3.4 L10.5 6 L11.7 7.7 L15.4 8 L15.5 9.5 L12.6 10.5 L11.2 11.4 L10 10.9 L8.2 12 L7 13.6 L6.2 15.6 L4.9 16.4 L3.5 15.6 L3.3 14 L4.3 11 L3.2 8.4 L2.6 5.6 Z" fill="#fff"/><circle cx="4.6" cy="5.3" r=".72" fill="#7014b4"/><circle cx="7.5" cy="5.2" r=".78" fill="#7014b4"/><circle cx="10.4" cy="7.5" r=".7" fill="#7014b4"/><path d="M6 9.1 Q7.6 10 9.3 8.9" stroke="#7014b4" stroke-width=".55" fill="none" opacity=".7"/></svg><span class="tx rs" style="font-size:11.2px;transform:scaleX(1.0559);left:72px">datadog</span><div class="sd" style="left:123px;top:44px;height:11px"></div><svg viewBox="0 0 11 11" width="11" height="11" style="position:absolute;left:131px;top:43px"><circle cx="5.5" cy="5.5" r="4.1" fill="none" stroke="#f3102e" stroke-width="1"/><path d="M5.5 5 V7.7 M5.5 3.2 V3.3" stroke="#f3102e" stroke-width="1" stroke-linecap="round"/></svg><span class="tx rs red" style="font-size:11.2px;transform:scaleX(1.0572);left:145.75px">Datadog Alert</span><div class="sd" style="left:226px;top:39px;height:20px"></div><svg viewBox="0 0 12 12" width="12" height="12" style="position:absolute;left:234px;top:43px"><path d="M4.2 1.5 Q1.1 3 1.3 6.4 Q1.6 9.2 4.2 10.5 M7.8 1.5 Q10.9 3 10.7 6.4 Q10.4 9.2 7.8 10.5" fill="none" stroke="#454d60" stroke-width="1.1" stroke-linecap="round"/><path d="M6 3.2 V6.4 L7.8 7.3" fill="none" stroke="#454d60" stroke-width="1.1" stroke-linecap="round" stroke-linejoin="round"/></svg><span class="tx rs" style="font-size:11.2px;transform:scaleX(0.9956);left:249.25px">13 mins ago</span><span class="tx cnt" style="font-size:13px;transform:scaleX(1.0600);">1</span><div class="sd" style="left:460px;top:13px;height:50px"></div><div class="ych" style="position:absolute;left:493px;top:0;width:180px;height:75px;display:flex"><div class="yl" style="width:21.75px"><div><span class="tx txr" style="font-size:12.8px;transform:scaleX(0.8730);">1.20</span></div><div><span class="tx txr" style="font-size:12.8px;transform:scaleX(1.0114);">0</span></div></div><div class="cg"></div></div><div class="br" style="left:666px;top:27px;height:21px"></div><div class="bAlert"><span class="tx txc" style="font-size:13px;transform:scaleX(1.0568);">Alert</span></div><div class="bDd"><span class="tx txc" style="font-size:13px;transform:scaleX(1.0376);">Datadog</span></div><div class="bSt"><span class="tx" style="font-size:13px;transform:scaleX(1.0116);position:absolute;left:8px;top:0;line-height:32px">For Review</span><svg viewBox="0 0 10 10" ><path d="M2 3.6 L5 6.6 L8 3.6"/></svg></div><div class="bInv"><span class="tx txc" style="font-size:13px;transform:scaleX(1.0545);">Investigate</span></div></div>
<div class="row" style="top:682px"><div class="ri"><svg viewBox="0 0 16 16" ><path d="M8 14.2 A6.3 6.3 0 1 0 2.5 11 L1.4 14.2 Z"/><path d="M8 4.4 V9.3 M8 10.2 V11.5" stroke="#fdab1e" stroke-width="1.9" stroke-linecap="butt"/></svg></div><span class="tx rt" style="font-size:13px;transform:scaleX(1.0482);">[No data on {kube_cluster_name:sandbox,pod_nam...</span><svg viewBox="0 0 16 17" width="16" height="17" style="position:absolute;left:52px;top:41px"><path d="M0.75 2.2 L13.9 0.1 L15 13.5 L6.4 14.5 L4.9 16.4 L3.6 14.75 L2 14.9 Z" fill="#7014b4"/><path d="M2.3 3.5 L3.7 2.5 L5 3.7 L8.3 3.1 L9.8 1.8 L10.7 3.4 L10.5 6 L11.7 7.7 L15.4 8 L15.5 9.5 L12.6 10.5 L11.2 11.4 L10 10.9 L8.2 12 L7 13.6 L6.2 15.6 L4.9 16.4 L3.5 15.6 L3.3 14 L4.3 11 L3.2 8.4 L2.6 5.6 Z" fill="#fff"/><circle cx="4.6" cy="5.3" r=".72" fill="#7014b4"/><circle cx="7.5" cy="5.2" r=".78" fill="#7014b4"/><circle cx="10.4" cy="7.5" r=".7" fill="#7014b4"/><path d="M6 9.1 Q7.6 10 9.3 8.9" stroke="#7014b4" stroke-width=".55" fill="none" opacity=".7"/></svg><span class="tx rs" style="font-size:11.2px;transform:scaleX(1.0559);left:72px">datadog</span><div class="sd" style="left:123px;top:44px;height:11px"></div><svg viewBox="0 0 11 11" width="11" height="11" style="position:absolute;left:131px;top:43px"><circle cx="5.5" cy="5.5" r="4.1" fill="none" stroke="#f3102e" stroke-width="1"/><path d="M5.5 5 V7.7 M5.5 3.2 V3.3" stroke="#f3102e" stroke-width="1" stroke-linecap="round"/></svg><span class="tx rs red" style="font-size:11.2px;transform:scaleX(1.0572);left:145.75px">Datadog Alert</span><div class="sd" style="left:226px;top:39px;height:20px"></div><svg viewBox="0 0 12 12" width="12" height="12" style="position:absolute;left:234px;top:43px"><path d="M4.2 1.5 Q1.1 3 1.3 6.4 Q1.6 9.2 4.2 10.5 M7.8 1.5 Q10.9 3 10.7 6.4 Q10.4 9.2 7.8 10.5" fill="none" stroke="#454d60" stroke-width="1.1" stroke-linecap="round"/><path d="M6 3.2 V6.4 L7.8 7.3" fill="none" stroke="#454d60" stroke-width="1.1" stroke-linecap="round" stroke-linejoin="round"/></svg><span class="tx rs" style="font-size:11.2px;transform:scaleX(0.9956);left:249.25px">13 mins ago</span><span class="tx cnt" style="font-size:13px;transform:scaleX(1.0600);">1</span><div class="sd" style="left:460px;top:13px;height:50px"></div><div class="ych" style="position:absolute;left:493px;top:0;width:180px;height:75px;display:flex"><div class="yl" style="width:21.75px"><div><span class="tx txr" style="font-size:12.8px;transform:scaleX(0.8730);">1.20</span></div><div><span class="tx txr" style="font-size:12.8px;transform:scaleX(1.0114);">0</span></div></div><div class="cg"></div></div><div class="br" style="left:666px;top:27px;height:21px"></div><div class="bAlert"><span class="tx txc" style="font-size:13px;transform:scaleX(1.0568);">Alert</span></div><div class="bDd"><span class="tx txc" style="font-size:13px;transform:scaleX(1.0376);">Datadog</span></div><div class="bSt"><span class="tx" style="font-size:13px;transform:scaleX(1.0116);position:absolute;left:8px;top:0;line-height:32px">For Review</span><svg viewBox="0 0 10 10" ><path d="M2 3.6 L5 6.6 L8 3.6"/></svg></div><div class="bInv"><span class="tx txc" style="font-size:13px;transform:scaleX(1.0545);">Investigate</span></div></div>
<div class="row" style="top:757px"><div class="ri"><svg viewBox="0 0 16 16" ><path d="M8 14.2 A6.3 6.3 0 1 0 2.5 11 L1.4 14.2 Z"/><path d="M8 4.4 V9.3 M8 10.2 V11.5" stroke="#fdab1e" stroke-width="1.9" stroke-linecap="butt"/></svg></div><span class="tx rt" style="font-size:13px;transform:scaleX(1.0482);">[No data on {kube_cluster_name:sandbox,pod_nam...</span><svg viewBox="0 0 16 17" width="16" height="17" style="position:absolute;left:52px;top:41px"><path d="M0.75 2.2 L13.9 0.1 L15 13.5 L6.4 14.5 L4.9 16.4 L3.6 14.75 L2 14.9 Z" fill="#7014b4"/><path d="M2.3 3.5 L3.7 2.5 L5 3.7 L8.3 3.1 L9.8 1.8 L10.7 3.4 L10.5 6 L11.7 7.7 L15.4 8 L15.5 9.5 L12.6 10.5 L11.2 11.4 L10 10.9 L8.2 12 L7 13.6 L6.2 15.6 L4.9 16.4 L3.5 15.6 L3.3 14 L4.3 11 L3.2 8.4 L2.6 5.6 Z" fill="#fff"/><circle cx="4.6" cy="5.3" r=".72" fill="#7014b4"/><circle cx="7.5" cy="5.2" r=".78" fill="#7014b4"/><circle cx="10.4" cy="7.5" r=".7" fill="#7014b4"/><path d="M6 9.1 Q7.6 10 9.3 8.9" stroke="#7014b4" stroke-width=".55" fill="none" opacity=".7"/></svg><span class="tx rs" style="font-size:11.2px;transform:scaleX(1.0559);left:72px">datadog</span><div class="sd" style="left:123px;top:44px;height:11px"></div><svg viewBox="0 0 11 11" width="11" height="11" style="position:absolute;left:131px;top:43px"><circle cx="5.5" cy="5.5" r="4.1" fill="none" stroke="#f3102e" stroke-width="1"/><path d="M5.5 5 V7.7 M5.5 3.2 V3.3" stroke="#f3102e" stroke-width="1" stroke-linecap="round"/></svg><span class="tx rs red" style="font-size:11.2px;transform:scaleX(1.0572);left:145.75px">Datadog Alert</span><div class="sd" style="left:226px;top:39px;height:20px"></div><svg viewBox="0 0 12 12" width="12" height="12" style="position:absolute;left:234px;top:43px"><path d="M4.2 1.5 Q1.1 3 1.3 6.4 Q1.6 9.2 4.2 10.5 M7.8 1.5 Q10.9 3 10.7 6.4 Q10.4 9.2 7.8 10.5" fill="none" stroke="#454d60" stroke-width="1.1" stroke-linecap="round"/><path d="M6 3.2 V6.4 L7.8 7.3" fill="none" stroke="#454d60" stroke-width="1.1" stroke-linecap="round" stroke-linejoin="round"/></svg><span class="tx rs" style="font-size:11.2px;transform:scaleX(0.9956);left:249.25px">14 mins ago</span><span class="tx cnt" style="font-size:13px;transform:scaleX(1.0600);">1</span><div class="sd" style="left:460px;top:13px;height:50px"></div><div class="ych" style="position:absolute;left:493px;top:0;width:180px;height:75px;display:flex"><div class="yl" style="width:21.75px"><div><span class="tx txr" style="font-size:12.8px;transform:scaleX(0.8730);">1.20</span></div><div><span class="tx txr" style="font-size:12.8px;transform:scaleX(1.0114);">0</span></div></div><div class="cg"></div></div><div class="br" style="left:666px;top:27px;height:21px"></div><div class="bAlert"><span class="tx txc" style="font-size:13px;transform:scaleX(1.0568);">Alert</span></div><div class="bDd"><span class="tx txc" style="font-size:13px;transform:scaleX(1.0376);">Datadog</span></div><div class="bSt"><span class="tx" style="font-size:13px;transform:scaleX(1.0116);position:absolute;left:8px;top:0;line-height:32px">For Review</span><svg viewBox="0 0 10 10" ><path d="M2 3.6 L5 6.6 L8 3.6"/></svg></div><div class="bInv"><span class="tx txc" style="font-size:13px;transform:scaleX(1.0545);">Investigate</span></div></div>
<div id="rstrip"></div><div id="rshadow"></div>
</div>
</body>
</html>
